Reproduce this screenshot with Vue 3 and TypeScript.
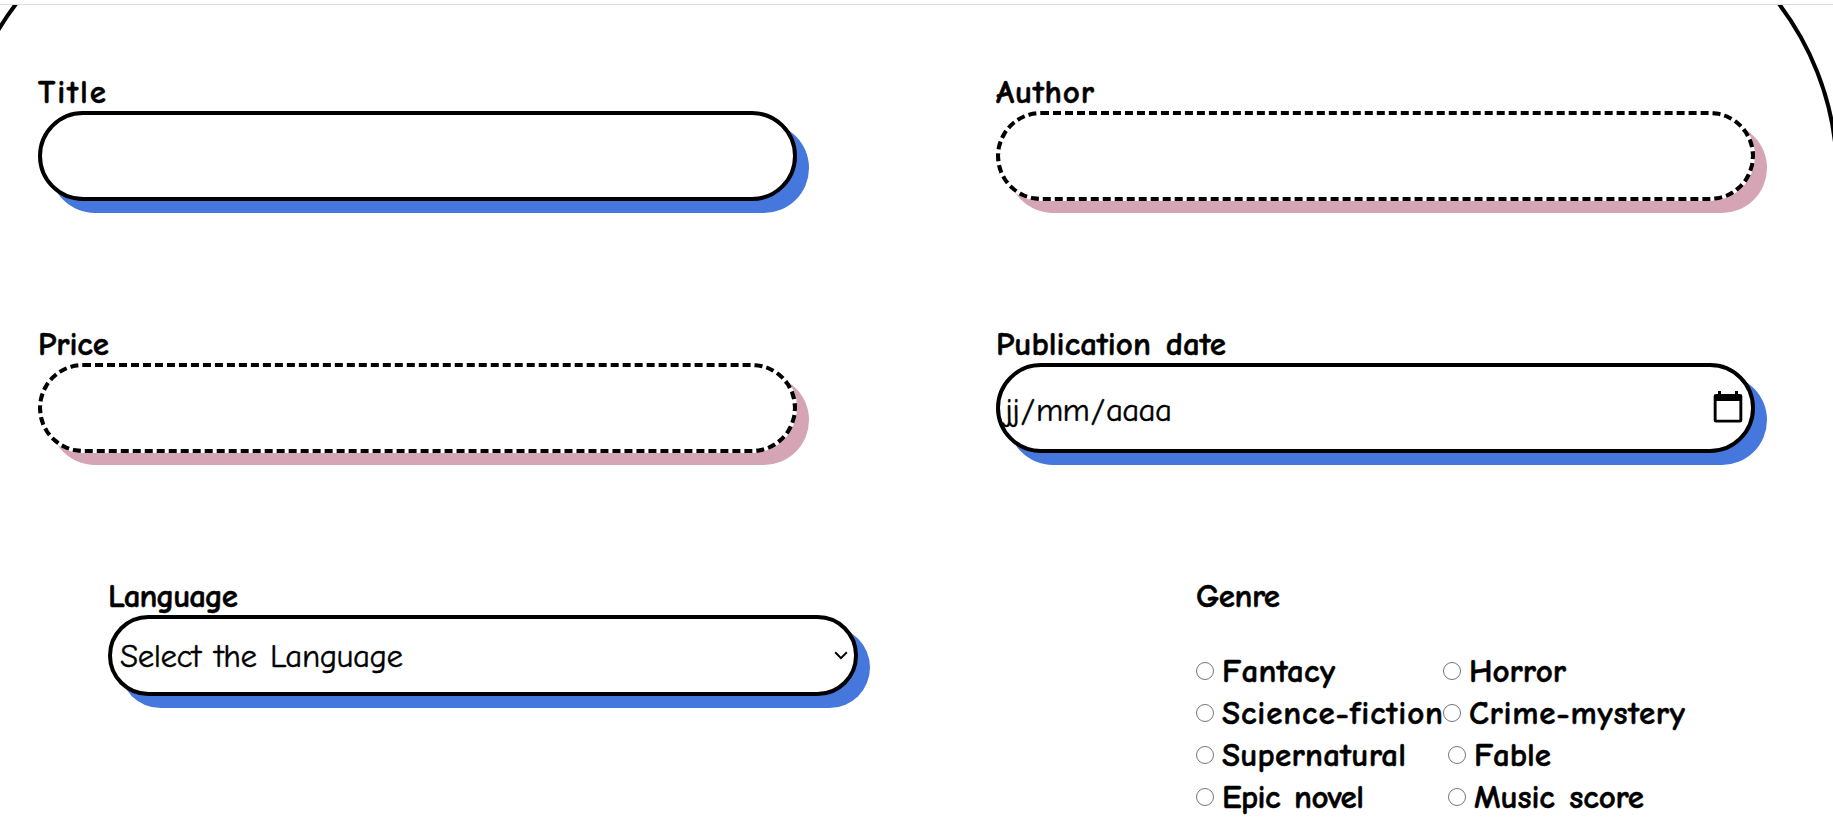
<script setup lang="ts">
import type { Directive } from 'vue'

interface Genre {
  name: string
  width: number
}

const genreRows: { shifted: boolean; items: Genre[] }[] = [
  { shifted: false, items: [{ name: 'Fantacy', width: 113 }, { name: 'Horror', width: 97 }] },
  { shifted: false, items: [{ name: 'Science-fiction', width: 221 }, { name: 'Crime-mystery', width: 216 }] },
  { shifted: true, items: [{ name: 'Supernatural', width: 184 }, { name: 'Fable', width: 77 }] },
  { shifted: true, items: [{ name: 'Epic novel', width: 142 }, { name: 'Music score', width: 170 }] },
]

// Spreads the letters of a text so that it fills the given width in pixels.
const vFit: Directive<HTMLElement, number> = {
  mounted(el, binding) {
    const count = (el.textContent ?? '').length
    const natural = el.getBoundingClientRect().width
    if (count > 1) {
      el.style.letterSpacing = `${(binding.value - natural) / (count - 1)}px`
    }
  },
}
</script>

<template>
  <div class="page">
    <header class="bar"></header>
    <main class="content">
      <div class="outline"></div>
      <form class="form" @submit.prevent>
        <div class="row">
          <div class="field">
            <label for="title"><span v-fit="68" class="text">Title</span></label>
            <input id="title" class="control solid" type="text" />
          </div>
          <div class="field">
            <label for="author"><span v-fit="98" class="text">Author</span></label>
            <input id="author" class="control dashed" type="text" />
          </div>
        </div>

        <div class="row">
          <div class="field">
            <label for="price"><span v-fit="71" class="text">Price</span></label>
            <input id="price" class="control dashed" type="text" />
          </div>
          <div class="field">
            <label><span v-fit="230" class="text">Publication date</span></label>
            <div class="control solid date">
              <span v-fit="167" class="text">jj<i class="slash">/</i>mm<i class="slash">/</i>aaaa</span>
              <svg class="calendar" width="30" height="32" viewBox="0 0 30 32">
                <path d="M5 0h3v4H5zM22 0h3v4h-3z" />
                <path fill-rule="evenodd" d="M3 3h24a2.3 2.3 0 0 1 2.3 2.3v24a2.3 2.3 0 0 1-2.3 2.3H3a2.3 2.3 0 0 1-2.3-2.3v-24A2.3 2.3 0 0 1 3 3zM3.6 10v18.8h22.800V10z" />
              </svg>
            </div>
          </div>
        </div>

        <div class="row last">
          <div class="field language">
            <label><span v-fit="130" class="text">Language</span></label>
            <div class="control solid select">
              <span v-fit="283" class="text">Select the Language</span>
              <svg class="chevron" width="14" height="9" viewBox="0 0 14 9">
                <path d="M1.200 1.300L7 7.100l5.800-5.800" />
              </svg>
            </div>
          </div>
          <div class="genre">
            <label><span v-fit="84" class="text">Genre</span></label>
            <div class="genres">
              <div v-for="(row, i) in genreRows" :key="i" class="genre-row" :class="{ shifted: row.shifted }">
                <label v-for="item in row.items" :key="item.name" class="option">
                  <input type="radio" name="genre" :value="item.name" />
                  <span v-fit="item.width" class="text">{{ item.name }}</span>
                </label>
              </div>
            </div>
          </div>
        </div>
      </form>
    </main>
  </div>
</template>

<style>
body {
  margin: 0;
  background: #fff;
  overflow: hidden;
}
</style>

<style scoped>
.page {
  height: 826px;
  display: flex;
  flex-direction: column;
  overflow: hidden;
  background: #fff;
  color: #000;
  font-family: "Comic Sans MS", "Comic Neue", Lato, "Open Sans", sans-serif;
  font-size: 33px;
  line-height: 42px;
}

.bar {
  flex: none;
  box-sizing: border-box;
  height: 5px;
  background: #fff;
  border-bottom: 1px solid #dcdcdc;
}

.content {
  flex: 1;
  position: relative;
  overflow: hidden;
}

.outline {
  position: absolute;
  box-sizing: border-box;
  left: -44px;
  top: -115px;
  width: 1883px;
  height: 1400px;
  border: 4px solid #000;
  border-radius: 286px;
}

.form {
  position: relative;
  display: flex;
  flex-direction: column;
  gap: 120px;
  padding: 64px 0 0 38px;
}

.row {
  display: grid;
  grid-template-columns: 759px 759px;
  column-gap: 199px;
}

.row.last {
  grid-template-columns: 750px 520px;
  column-gap: 338px;
  padding-left: 70px;
  align-items: start;
}

label {
  display: block;
  box-sizing: border-box;
  height: 42px;
  padding-top: 2px;
  font-weight: 700;
  white-space: nowrap;
  -webkit-text-stroke: 0.5px #000;
}

.text {
  display: inline-block;
  white-space: nowrap;
  word-spacing: 3px;
}

.control {
  box-sizing: border-box;
  display: flex;
  align-items: center;
  width: 100%;
  height: 90px;
  margin: 0;
  padding: 0 10px;
  border: 4px solid #000;
  border-radius: 45px;
  outline: none;
  background: #fff;
  font: inherit;
  -webkit-text-stroke: 0.4px #000;
}

.solid {
  box-shadow: 12px 12px 0 #4577dc;
}

.dashed {
  border-style: dashed;
  box-shadow: 12px 12px 0 #d5a4b5;
}

.date {
  justify-content: space-between;
  padding: 3px 8px 0 5px;
}

.slash {
  margin: 0 1.5px;
  font-style: normal;
}

.calendar {
  flex: none;
  margin-top: -5px;
}

.select {
  height: 81px;
  justify-content: space-between;
  padding: 1px 6px 0 8px;
  border-radius: 41px;
}

.chevron {
  flex: none;
  margin-top: -2px;
  fill: none;
  stroke: #000;
  stroke-width: 2;
}

.genres {
  margin-top: 33px;
}

.genre-row {
  display: grid;
  grid-template-columns: 247px 250px;
}

.genre-row.shifted {
  grid-template-columns: 252px 250px;
}

.option {
  display: flex;
  align-items: flex-start;
  gap: 8px;
}

.option input {
  flex: none;
  box-sizing: border-box;
  appearance: none;
  width: 18px;
  height: 18px;
  margin: 12px 0 0;
  border: 1.3px solid #767676;
  border-radius: 50%;
}

.option input:checked {
  border-width: 5px;
}
</style>
